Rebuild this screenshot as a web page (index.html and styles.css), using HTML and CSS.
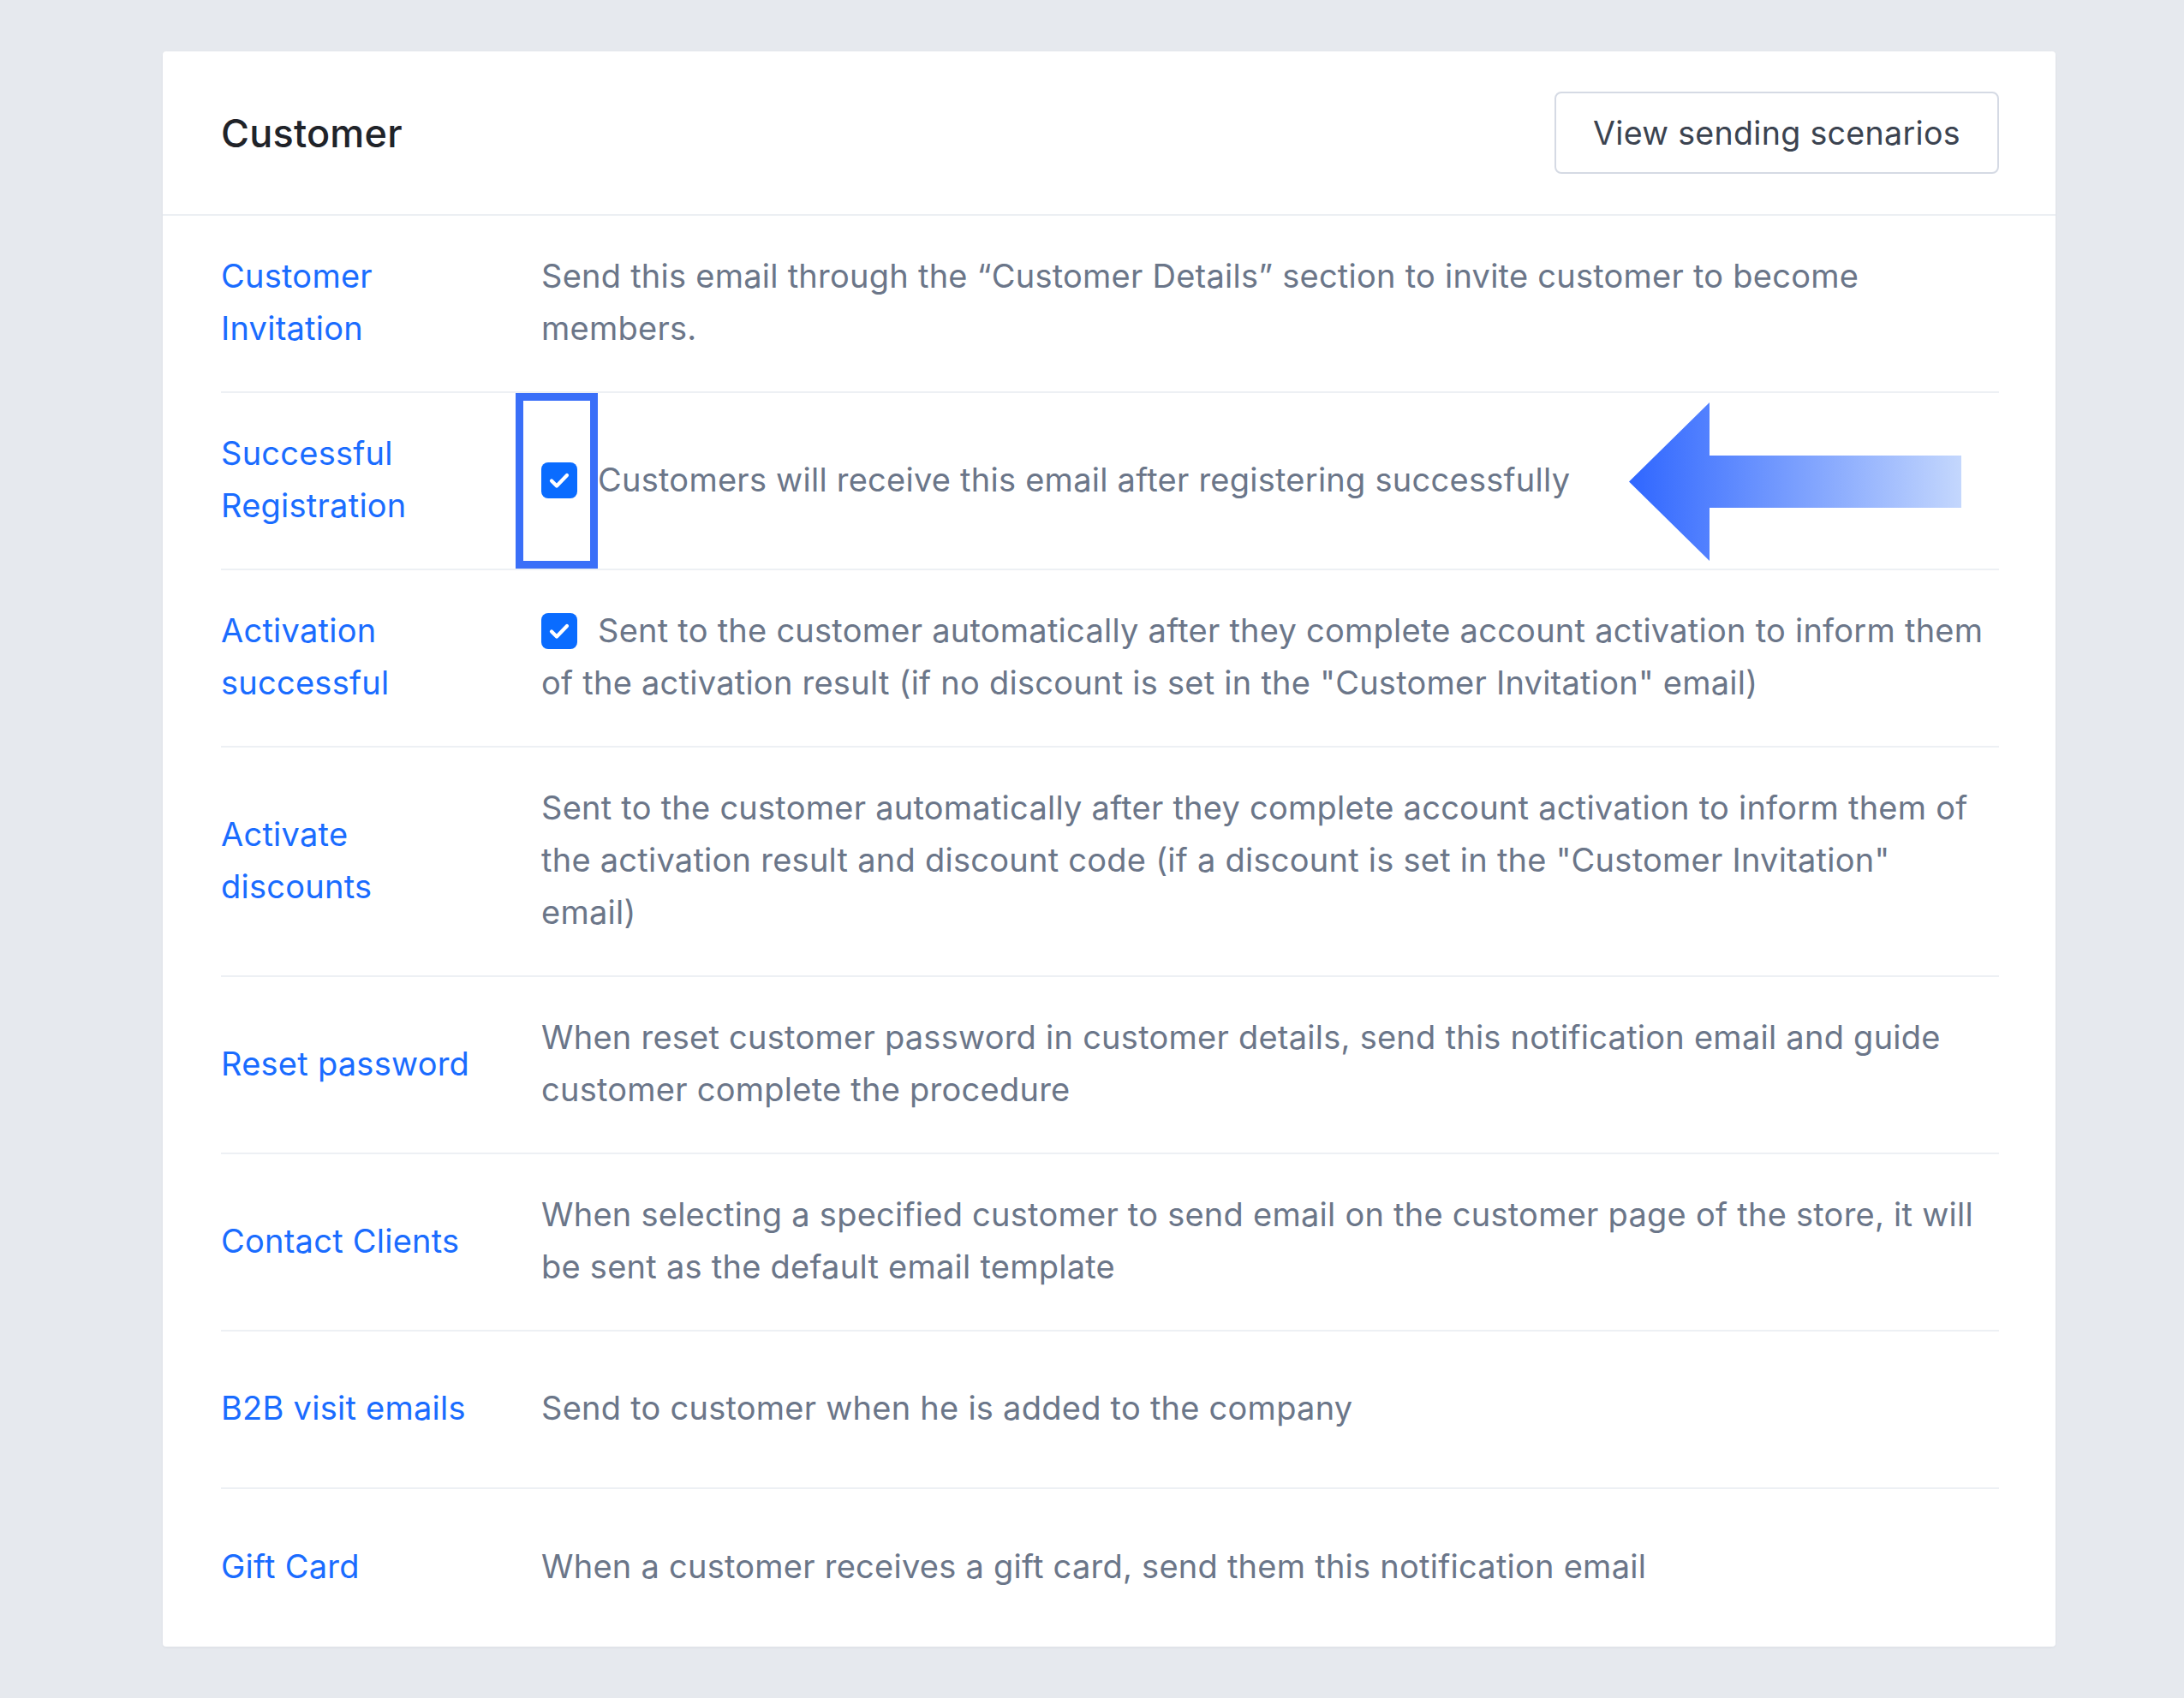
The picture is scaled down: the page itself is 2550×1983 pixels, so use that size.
FILE: index.html
```html
<!DOCTYPE html>
<html lang="en">
<head>
<meta charset="utf-8">
<title>Customer notifications</title>
<link rel="stylesheet" href="styles.css">
</head>
<body>
<div class="page">
  <section class="card">
    <header class="card-header">
      <h2 class="title">Customer</h2>
      <button class="btn" type="button">View sending scenarios</button>
    </header>
    <div class="rows">
      <div class="row">
        <div class="label">Customer Invitation</div>
        <div class="desc">Send this email through the “Customer Details” section to invite customer to become<br>members.</div>
      </div>
      <div class="row">
        <div class="label">Successful Registration</div>
        <div class="desc"><span class="check"><svg viewBox="0 0 42 42" width="42" height="42"><path d="M12 21.5l6 6 12-12.5" fill="none" stroke="#fff" stroke-width="4.2" stroke-linecap="round" stroke-linejoin="round"/></svg></span>Customers will receive this email after registering successfully</div>
        <div class="focus-box"></div>
        <svg class="arrow" viewBox="0 0 388 185" width="388" height="185">
          <defs>
            <linearGradient id="ag" x1="0" y1="0" x2="1" y2="0">
              <stop offset="0" stop-color="#2f66ff"/>
              <stop offset="1" stop-color="#c4d7fd"/>
            </linearGradient>
          </defs>
          <path d="M0 92.5 L94 0 L94 62 L388 62 L388 123 L94 123 L94 185 Z" fill="url(#ag)"/>
        </svg>
      </div>
      <div class="row">
        <div class="label">Activation successful</div>
        <div class="desc"><span class="check"><svg viewBox="0 0 42 42" width="42" height="42"><path d="M12 21.5l6 6 12-12.5" fill="none" stroke="#fff" stroke-width="4.2" stroke-linecap="round" stroke-linejoin="round"/></svg></span>Sent to the customer automatically after they complete account activation to inform them<br>of the activation result (if no discount is set in the "Customer Invitation" email)</div>
      </div>
      <div class="row">
        <div class="label">Activate discounts</div>
        <div class="desc">Sent to the customer automatically after they complete account activation to inform them of<br>the activation result and discount code (if a discount is set in the "Customer Invitation"<br>email)</div>
      </div>
      <div class="row">
        <div class="label">Reset password</div>
        <div class="desc">When reset customer password in customer details, send this notification email and guide<br>customer complete the procedure</div>
      </div>
      <div class="row">
        <div class="label">Contact Clients</div>
        <div class="desc">When selecting a specified customer to send email on the customer page of the store, it will<br>be sent as the default email template</div>
      </div>
      <div class="row">
        <div class="label">B2B visit emails</div>
        <div class="desc">Send to customer when he is added to the company</div>
      </div>
      <div class="row">
        <div class="label">Gift Card</div>
        <div class="desc">When a customer receives a gift card, send them this notification email</div>
      </div>
    </div>
  </section>
</div>
</body>
</html>
```

FILE: styles.css
```css
* { box-sizing: border-box; }
html, body {
  margin: 0;
  padding: 0;
  background: #e6e9ee;
}
body {
  font-family: Inter, "Noto Sans", "Liberation Sans", sans-serif;
  color: #6b7689;
}
.page {
  padding: 60px 150px 62px 190px;
}
.card {
  width: 2210px;
  background: #ffffff;
  border-radius: 4px;
  box-shadow: 0 1px 3px rgba(30, 40, 60, 0.06);
}
.card-header {
  height: 192px;
  padding: 0 66px 0 68px;
  display: flex;
  align-items: center;
  justify-content: space-between;
  border-bottom: 2px solid #eceff3;
}
.title {
  margin: 0;
  font-size: 45px;
  font-weight: 500;
  color: #1f2329;
  letter-spacing: 0.2px;
}
.btn {
  width: 519px;
  height: 96px;
  background: #ffffff;
  border: 2px solid #d5dae4;
  border-radius: 8px;
  font-family: inherit;
  font-size: 37.6px;
  color: #3b4350;
  letter-spacing: 0.3px;
}
.rows {
  padding: 0 66px 0 68px;
}
.row {
  position: relative;
  display: grid;
  grid-template-columns: 374px 1fr;
  align-items: center;
  min-height: 184px;
  padding: 40px 0 43px;
  border-bottom: 2px solid #edf0f4;
  font-size: 38px;
  line-height: 61px;
  letter-spacing: 0.25px;
}
.row:last-child {
  border-bottom: none;
}
.label {
  color: #1a6cff;
  padding-right: 64px;
}
.desc {
  color: #6b7689;
  margin-right: -40px;
}
.check {
  display: inline-block;
  width: 42px;
  height: 42px;
  margin-right: 24px;
  vertical-align: -8px;
  background: #0a6cff;
  border-radius: 8px;
}
.check svg {
  display: block;
}
.focus-box {
  position: absolute;
  left: 344px;
  top: 0;
  bottom: 0;
  width: 96px;
  border: 9px solid #3a6ff8;
}
.arrow {
  position: absolute;
  left: 1644px;
  top: 11px;
}
```
